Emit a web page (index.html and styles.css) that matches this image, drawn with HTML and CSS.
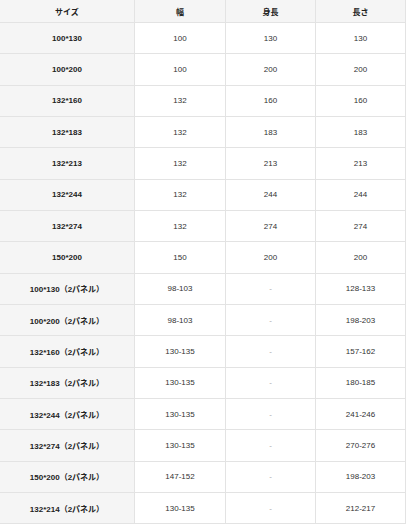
FILE: index.html
```html
<!DOCTYPE html>
<html lang="ja">
<head>
<meta charset="utf-8">
<link rel="stylesheet" href="styles.css">
</head>
<body>
<div class="table">
  <div class="cell head">サイズ</div><div class="cell head">幅</div><div class="cell head">身長</div><div class="cell head">長さ</div>
  <div class="cell name">100*130</div><div class="cell">100</div><div class="cell">130</div><div class="cell">130</div>
  <div class="cell name">100*200</div><div class="cell">100</div><div class="cell">200</div><div class="cell">200</div>
  <div class="cell name">132*160</div><div class="cell">132</div><div class="cell">160</div><div class="cell">160</div>
  <div class="cell name">132*183</div><div class="cell">132</div><div class="cell">183</div><div class="cell">183</div>
  <div class="cell name">132*213</div><div class="cell">132</div><div class="cell">213</div><div class="cell">213</div>
  <div class="cell name">132*244</div><div class="cell">132</div><div class="cell">244</div><div class="cell">244</div>
  <div class="cell name">132*274</div><div class="cell">132</div><div class="cell">274</div><div class="cell">274</div>
  <div class="cell name">150*200</div><div class="cell">150</div><div class="cell">200</div><div class="cell">200</div>
  <div class="cell name">100*130（2パネル）</div><div class="cell">98-103</div><div class="cell dash">-</div><div class="cell">128-133</div>
  <div class="cell name">100*200（2パネル）</div><div class="cell">98-103</div><div class="cell dash">-</div><div class="cell">198-203</div>
  <div class="cell name">132*160（2パネル）</div><div class="cell">130-135</div><div class="cell dash">-</div><div class="cell">157-162</div>
  <div class="cell name">132*183（2パネル）</div><div class="cell">130-135</div><div class="cell dash">-</div><div class="cell">180-185</div>
  <div class="cell name">132*244（2パネル）</div><div class="cell">130-135</div><div class="cell dash">-</div><div class="cell">241-246</div>
  <div class="cell name">132*274（2パネル）</div><div class="cell">130-135</div><div class="cell dash">-</div><div class="cell">270-276</div>
  <div class="cell name">150*200（2パネル）</div><div class="cell">147-152</div><div class="cell dash">-</div><div class="cell">198-203</div>
  <div class="cell name">132*214（2パネル）</div><div class="cell">130-135</div><div class="cell dash">-</div><div class="cell">212-217</div>
</div>
</body>
</html>
```
FILE: styles.css
```css
html, body {
  margin: 0;
  padding: 0;
  background: #fff;
}
body {
  font-family: "Liberation Sans", "Noto Sans CJK JP", sans-serif;
  font-size: 8px;
  color: #333;
}
.table {
  display: inline-grid;
  grid-template-columns: 134px 90px 89px 89px;
  grid-template-rows: 22px;
  grid-auto-rows: 30.33px;
  gap: 1px;
  background: #e3e3e3;
  padding: 0 1px 1px 0;
}
.cell {
  background: #fff;
  display: flex;
  align-items: center;
  justify-content: center;
  white-space: nowrap;
}
.head,
.name {
  background: #f5f5f5;
  font-weight: bold;
  color: #222;
}
.dash {
  color: #aaa;
}
```
